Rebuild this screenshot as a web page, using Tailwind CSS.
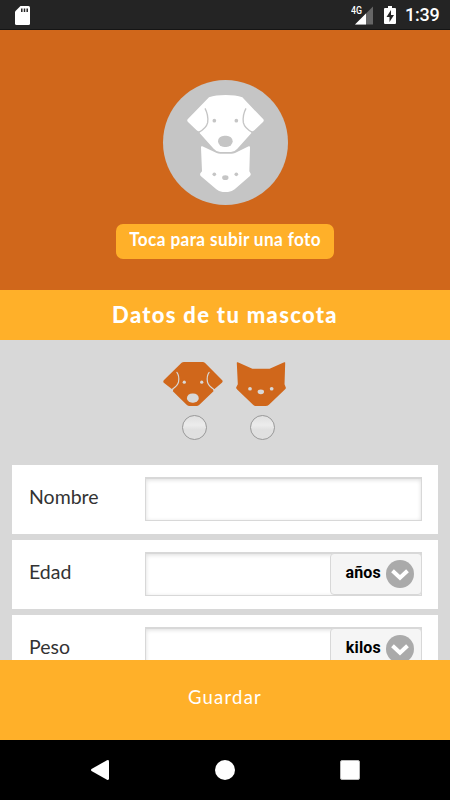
<!DOCTYPE html>
<html lang="es">
<head>
<meta charset="utf-8">
<meta name="viewport" content="width=device-width">
<title>Datos de tu mascota</title>
<script src="https://cdn.jsdelivr.net/npm/@tailwindcss/browser@4"></script>
</head>
<body class="flex h-[800px] w-[450px] flex-col overflow-hidden bg-[#d8d8d8] font-['Lato','Liberation_Sans',sans-serif]">
<svg class="hidden">
  <symbol id="dog" viewBox="0 0 178 131">
    <path fill="currentColor" d="M55 2Q58 0 62 0H118Q122 0 125 3L176 54Q179 58 175 62L154 80Q151 83 148 80L150 87L108 127Q104 131 99 131H79Q74 131 70 127L29 87L31 80Q28 83 25 80L2 62Q-1 58 2 54Z"/>
    <path fill="none" stroke="var(--gap)" stroke-width="3.5" stroke-linecap="round" d="M41 31Q49 42 46 59Q44 70 25 83M137 31Q129 42 132 59Q134 70 153 83"/>
    <circle cx="63" cy="60" r="4.8" fill="var(--gap)"/><circle cx="115" cy="60" r="4.8" fill="var(--gap)"/>
    <rect x="71" y="94" width="35" height="27" rx="16" ry="13" fill="var(--gap)"/>
  </symbol>
  <symbol id="cat" viewBox="0 0 147 130">
    <path fill="currentColor" d="M2 3Q1 0 5 1L48 20H99L142 1Q146 0 145 3L143 66L147 76Q147 79 144 81L97 126Q93 130 87 130H60Q54 130 50 126L3 81Q0 78 0 75L5 66Z"/>
    <circle cx="41" cy="79" r="5.5" fill="var(--gap)"/><circle cx="105" cy="79" r="5.5" fill="var(--gap)"/>
    <ellipse cx="73" cy="88" rx="9.5" ry="7" fill="var(--gap)"/>
  </symbol>
  <symbol id="chevron" viewBox="0 0 28 28">
    <circle cx="14" cy="14" r="14" fill="#aaa"/>
    <path d="M6.5 10.8L14 17.8L21.5 10.8" fill="none" stroke="#fff" stroke-width="4"/>
  </symbol>
</svg>

<header class="flex h-[30px] shrink-0 items-center border-b border-[#151515] bg-[#242424] pr-[10px] pl-[15px] text-white">
  <svg class="mt-px h-[19px] w-[15px]" viewBox="0 0 15 19"><path fill="#fff" d="M5.5 0H13.5Q15 0 15 1.5V17.5Q15 19 13.5 19H1.5Q0 19 0 17.5V5.5Z"/><path stroke="#242424" stroke-width="1.5" d="M6.8 2.5V6M9.5 2.5V6M12.2 2.5V6"/></svg>
  <svg class="mt-px ml-auto h-[19px] w-[23px]" viewBox="0 0 23 19"><path fill="#666" d="M4 18.5L22 .5V18.5Z"/><path fill="#fff" d="M4 18.5L15 7.5V18.5Z"/><path fill="#242424" d="M0 0H12V9H0Z"/><text x="0" y="8.3" fill="#fff" font-family="Roboto, sans-serif" font-size="10" font-weight="500" textLength="11" lengthAdjust="spacingAndGlyphs">4G</text></svg>
  <svg class="mt-px ml-[10px] h-[18px] w-[12px]" viewBox="0 0 12 18"><path fill="#fff" d="M4 0H8V2H11Q12 2 12 3V17Q12 18 11 18H1Q0 18 0 17V3Q0 2 1 2H4Z"/><path fill="#242424" d="M7 4L2.5 11H5.5V16L10 9H7Z"/></svg>
  <span class="ml-[9px] w-[35px] pt-px font-['Roboto',sans-serif] text-[18px] leading-none font-medium tracking-[-0.2px] whitespace-nowrap">1:39</span>
</header>

<section class="flex h-[260px] shrink-0 flex-col items-center bg-[#d0671b] pt-[50px]">
  <div class="flex size-[125px] flex-col items-center rounded-full bg-[#c5c5c5] pt-[15px] text-white [--gap:#c5c5c5]">
    <svg class="h-[58px] w-[77px]" viewBox="0 0 231 174"><path fill="currentColor" d="M66 7Q86 0 116 0T166 7L229 73Q232 77 228 81L202 106Q197 111 190 108L194 113L151 161Q142 171 132 171H99Q89 171 80 161L37 113L41 108Q34 111 29 106L3 81Q-1 77 2 73Z"/><path fill="none" stroke="var(--gap)" stroke-width="4" d="M54 40Q65 60 62 83Q58 100 35 112M177 40Q166 60 169 83Q173 100 196 112"/><circle cx="82" cy="77" r="5.5" fill="var(--gap)"/><circle cx="148" cy="77" r="5.5" fill="var(--gap)"/><rect x="93" y="122" width="44" height="34" rx="19" ry="17" fill="var(--gap)"/></svg>
    <svg class="-mt-[7px] h-[46px] w-[51px]" viewBox="0 0 153 138"><path fill="currentColor" d="M3 5Q2 0 7 1L50 21Q55 23 61 23H94Q100 23 105 21L146 1Q151 0 150 5L148 76L152 83Q153 87 149 91L104 130Q94 138 84 138H68Q58 138 49 130L3 91Q-1 87 1 82L6 76Z"/><circle cx="43" cy="85" r="5.5" fill="var(--gap)"/><circle cx="109" cy="85" r="5.5" fill="var(--gap)"/><ellipse cx="76" cy="95" rx="9.5" ry="7" fill="var(--gap)"/></svg>
  </div>
  <button class="mt-[19px] flex h-[35px] w-[218px] justify-center rounded-[7px] bg-[#ffb029] pt-[5px] text-white"><span class="scale-x-[0.93] text-[18.5px] leading-[21px] font-bold tracking-[0.4px] whitespace-nowrap">Toca para subir una foto</span></button>
</section>

<h1 class="flex h-[50px] shrink-0 items-center justify-center bg-[#ffb029] pb-px text-[22px] font-black tracking-[1.3px] text-white">Datos de tu mascota</h1>

<main class="flex h-[320px] shrink-0 flex-col overflow-hidden px-3">
  <div class="flex h-[125px] shrink-0 justify-center gap-[13px] pt-[22px] pr-px text-[#d0671b] [--gap:#d8d8d8]">
    <label class="flex w-[60px] flex-col items-center gap-[9px]"><svg class="h-[44px] w-[60px]"><use href="#dog"/></svg><span class="ml-[3px] size-[25px] rounded-full border border-[#999] bg-linear-to-b from-[#e0e0e0] via-[#ececec] via-40% to-[#e0e0e0] to-60%"></span></label>
    <label class="flex w-[50px] flex-col items-center gap-[9px]"><svg class="h-[44px] w-[50px]"><use href="#cat"/></svg><span class="ml-[3px] size-[25px] rounded-full border border-[#999] bg-linear-to-b from-[#e0e0e0] via-[#ececec] via-40% to-[#e0e0e0] to-60%"></span></label>
  </div>
  <div class="flex flex-col gap-[6px] text-[19.5px] text-[#333]">
    <div class="flex h-[69px] shrink-0 bg-white pt-[12px] pr-4 pl-[17px]">
      <span class="w-[116px] pt-[6px] leading-7">Nombre</span>
      <div class="h-[44px] flex-1 border border-t-2 border-[#d8d8d8] shadow-[inset_0_1px_4px_#ddd]"></div>
    </div>
    <div class="flex h-[69px] shrink-0 bg-white pt-[12px] pr-4 pl-[17px]">
      <span class="w-[116px] pt-[6px] leading-7">Edad</span>
      <div class="flex h-[44px] flex-1 justify-end border border-t-2 border-[#d8d8d8] shadow-[inset_0_1px_4px_#ddd]"><div class="-mt-px -mr-px flex w-[92px] items-center justify-end rounded-[4px] border border-[#d8d8d8] bg-[#f5f5f5] pr-[7px] font-['Roboto',sans-serif] text-[16px] font-bold text-black"><span class="mr-[5px] -mt-[3px] tracking-[0.2px]">años</span><svg class="size-[28px]"><use href="#chevron"/></svg></div></div>
    </div>
    <div class="flex h-[69px] shrink-0 bg-white pt-[12px] pr-4 pl-[17px]">
      <span class="w-[116px] pt-[6px] leading-7">Peso</span>
      <div class="flex h-[44px] flex-1 justify-end border border-t-2 border-[#d8d8d8] shadow-[inset_0_1px_4px_#ddd]"><div class="-mt-px -mr-px flex w-[92px] items-center justify-end rounded-[4px] border border-[#d8d8d8] bg-[#f5f5f5] pr-[7px] font-['Roboto',sans-serif] text-[16px] font-bold text-black"><span class="mr-[5px] -mt-[3px] tracking-[0.2px]">kilos</span><svg class="size-[28px]"><use href="#chevron"/></svg></div></div>
    </div>
  </div>
</main>

<button class="flex h-[80px] shrink-0 items-center justify-center bg-[#ffb029] pb-[5px] text-[18.5px] tracking-[1.2px] text-white">Guardar</button>

<nav class="flex h-[60px] shrink-0 items-center justify-between bg-black pr-[90px] pl-[90px]">
  <svg class="size-5" viewBox="0 0 20 20"><path fill="#fff" d="M1.5 9Q.5 10 1.5 11L17 19.8Q19 20.5 19 18.5V1.5Q19-.5 17 .2Z"/></svg>
  <span class="size-5 rounded-full bg-white"></span>
  <span class="size-5 rounded-[2px] border border-[#bbb] bg-white"></span>
</nav>
</body>
</html>
